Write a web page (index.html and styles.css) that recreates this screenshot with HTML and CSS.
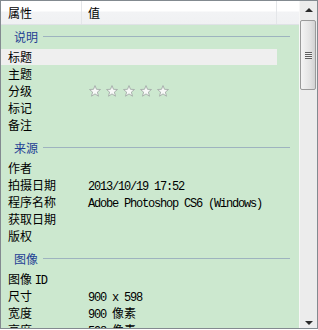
FILE: index.html
```html
<!DOCTYPE html>
<html lang="zh">
<head>
<meta charset="utf-8">
<link rel="stylesheet" href="styles.css">
</head>
<body>
<div class="panel">
  <div class="main">
    <div class="head">
      <div class="hc c1">属性</div>
      <div class="hc c2">值</div>
      <div class="hc c3"></div>
    </div>
    <div class="list">
      <div class="sec first"><span>说明</span><i></i></div>
      <div class="row sel"><span class="k">标题</span><span class="v"></span></div>
      <div class="row"><span class="k">主题</span><span class="v"></span></div>
      <div class="row"><span class="k">分级</span><span class="v stars">
        <svg viewBox="0 0 12 12"><polygon points="6,0.6 7.5,4.3 11.5,4.5 8.4,7.1 9.5,11.2 6,8.9 2.5,11.2 3.6,7.1 0.5,4.5 4.5,4.3"/></svg>
        <svg viewBox="0 0 12 12"><polygon points="6,0.6 7.5,4.3 11.5,4.5 8.4,7.1 9.5,11.2 6,8.9 2.5,11.2 3.6,7.1 0.5,4.5 4.5,4.3"/></svg>
        <svg viewBox="0 0 12 12"><polygon points="6,0.6 7.5,4.3 11.5,4.5 8.4,7.1 9.5,11.2 6,8.9 2.5,11.2 3.6,7.1 0.5,4.5 4.5,4.3"/></svg>
        <svg viewBox="0 0 12 12"><polygon points="6,0.6 7.5,4.3 11.5,4.5 8.4,7.1 9.5,11.2 6,8.9 2.5,11.2 3.6,7.1 0.5,4.5 4.5,4.3"/></svg>
        <svg viewBox="0 0 12 12"><polygon points="6,0.6 7.5,4.3 11.5,4.5 8.4,7.1 9.5,11.2 6,8.9 2.5,11.2 3.6,7.1 0.5,4.5 4.5,4.3"/></svg>
      </span></div>
      <div class="row"><span class="k">标记</span><span class="v"></span></div>
      <div class="row"><span class="k">备注</span><span class="v"></span></div>

      <div class="sec"><span>来源</span><i></i></div>
      <div class="row"><span class="k">作者</span><span class="v"></span></div>
      <div class="row"><span class="k">拍摄日期</span><span class="v"><span class="m">2013/10/19 17:52</span></span></div>
      <div class="row"><span class="k">程序名称</span><span class="v"><span class="m">Adobe Photoshop CS6 (Windows)</span></span></div>
      <div class="row"><span class="k">获取日期</span><span class="v"></span></div>
      <div class="row"><span class="k">版权</span><span class="v"></span></div>

      <div class="sec"><span>图像</span><i></i></div>
      <div class="row"><span class="k">图像 <span class="m">ID</span></span><span class="v"></span></div>
      <div class="row"><span class="k">尺寸</span><span class="v"><span class="m">900 x 598</span></span></div>
      <div class="row"><span class="k">宽度</span><span class="v"><span class="m">900 </span>像素</span></div>
      <div class="row"><span class="k">高度</span><span class="v"><span class="m">598 </span>像素</span></div>
    </div>
  </div>
  <div class="sb">
    <div class="btn"><b class="up"></b></div>
    <div class="thumb"><div class="grip"></div></div>
    <div class="track"></div>
    <div class="btn"><b class="down"></b></div>
  </div>
</div>
</body>
</html>
```
FILE: styles.css
```css
html, body {
  margin: 0;
  padding: 0;
  background: #ffffff;
}
body {
  font-family: "Noto Sans CJK SC", "Liberation Sans", sans-serif;
  font-size: 12px;
  color: #000;
}
.panel {
  box-sizing: border-box;
  width: 318px;
  height: 329px;
  border: 1px solid #838a90;
  display: flex;
  overflow: hidden;
}
.main {
  width: 298px;
  display: flex;
  flex-direction: column;
  overflow: hidden;
}
.head {
  height: 23px;
  flex: none;
  display: flex;
  border-bottom: 1px solid #dfe2e6;
  background: linear-gradient(#ffffff 0, #ffffff 10px, #f2f3f5 11px, #f0f1f3 23px);
}
.hc {
  box-sizing: border-box;
  height: 23px;
  line-height: 23px;
  border-right: 1px solid #e4e6e9;
}
.c1 { width: 81px; padding-left: 7px; }
.c2 { width: 195px; padding-left: 6px; }
.c3 { flex: 1; border-right: 0; }
.list {
  flex: 1;
  background: #cce8cf;
  overflow: hidden;
}
.sec {
  height: 23px;
  margin: 2px 9px 1px 0;
  padding-left: 13px;
  display: flex;
  align-items: center;
  color: #1f3f94;
}
.sec.first { margin-top: 0; }
.sec i {
  flex: 1;
  height: 1px;
  margin-left: 5px;
  background: #9eb3bf;
}
.row {
  height: 16px;
  line-height: 16px;
  padding-bottom: 1px;
  margin-right: 22px;
  display: flex;
  white-space: nowrap;
  background-clip: content-box;
}
.row.sel { background-color: #efefef; }
.k {
  box-sizing: border-box;
  width: 87px;
  padding-left: 7px;
}
.m {
  font-family: "Liberation Mono", "DejaVu Sans Mono", monospace;
  font-size: 12px;
  letter-spacing: -1.2px;
}
.stars {
  display: flex;
  align-items: center;
  gap: 5px;
  padding-left: 1px;
}
.stars svg {
  width: 12px;
  height: 12px;
  display: block;
}
.stars polygon {
  fill: #f7f8f7;
  stroke: #a3aaa7;
  stroke-width: 0.9;
  stroke-linejoin: round;
}
.sb {
  width: 17px;
  border-left: 1px solid #f7f7f7;
  background: #ececec;
  display: flex;
  flex-direction: column;
}
.btn {
  height: 17px;
  flex: none;
  display: flex;
  align-items: center;
  justify-content: center;
}
.up, .down {
  width: 0;
  height: 0;
  border-left: 4px solid transparent;
  border-right: 4px solid transparent;
}
.up { border-bottom: 4px solid #2a2a2a; }
.down { border-top: 4px solid #2a2a2a; margin-top: 6px; }
.thumb {
  box-sizing: border-box;
  height: 70px;
  margin: 2px 1px 0 0;
  border: 1px solid #9a9a9a;
  border-radius: 2px;
  background: linear-gradient(90deg, #f4f4f4, #e4e4e4 60%, #d2d2d2);
  display: flex;
  align-items: center;
  justify-content: center;
}
.grip {
  width: 7px;
  height: 7px;
  background: repeating-linear-gradient(#5e5e5e 0, #5e5e5e 1px, #f0f0f0 1px, #f0f0f0 2px);
}
.track { flex: 1; }
```
